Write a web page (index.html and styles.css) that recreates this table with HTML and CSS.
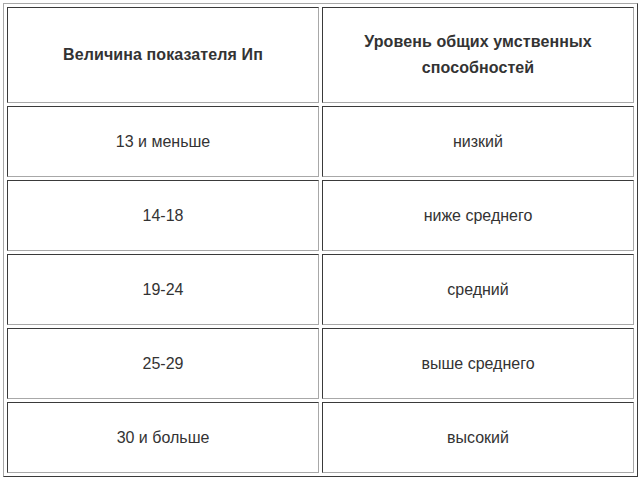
FILE: index.html
```html
<!DOCTYPE html>
<html>
<head>
<meta charset="utf-8">
<link rel="stylesheet" href="styles.css">
</head>
<body>
<table class="grid">
  <tr class="head">
    <th>Величина показателя Ип</th>
    <th>Уровень общих умственных<br>способностей</th>
  </tr>
  <tr><td>13 и меньше</td><td>низкий</td></tr>
  <tr><td>14-18</td><td>ниже среднего</td></tr>
  <tr><td>19-24</td><td>средний</td></tr>
  <tr><td>25-29</td><td>выше среднего</td></tr>
  <tr><td>30 и больше</td><td>высокий</td></tr>
</table>
</body>
</html>
```
FILE: styles.css
```css
html, body {
  margin: 0;
  padding: 0;
  background: #ffffff;
}
body {
  font-family: "Liberation Sans", Arial, sans-serif;
  color: #333333;
}
.grid {
  margin: 3px;
  width: 635px;
  border-collapse: separate;
  border-spacing: 3px;
  border-style: solid;
  border-width: 1px;
  border-color: #a8a8a8 #3a3a3a #3a3a3a #a8a8a8;
  table-layout: fixed;
}
.grid th, .grid td {
  box-sizing: border-box;
  border-style: solid;
  border-width: 1px;
  border-color: #3a3a3a #a8a8a8 #a8a8a8 #3a3a3a;
  text-align: center;
  vertical-align: middle;
  padding: 0 8px;
}
.grid th {
  height: 96px;
  font-size: 16px;
  font-weight: bold;
  line-height: 26px;
  letter-spacing: 0.1px;
}
.grid td {
  height: 71px;
  font-size: 16px;
  font-weight: normal;
}
```
